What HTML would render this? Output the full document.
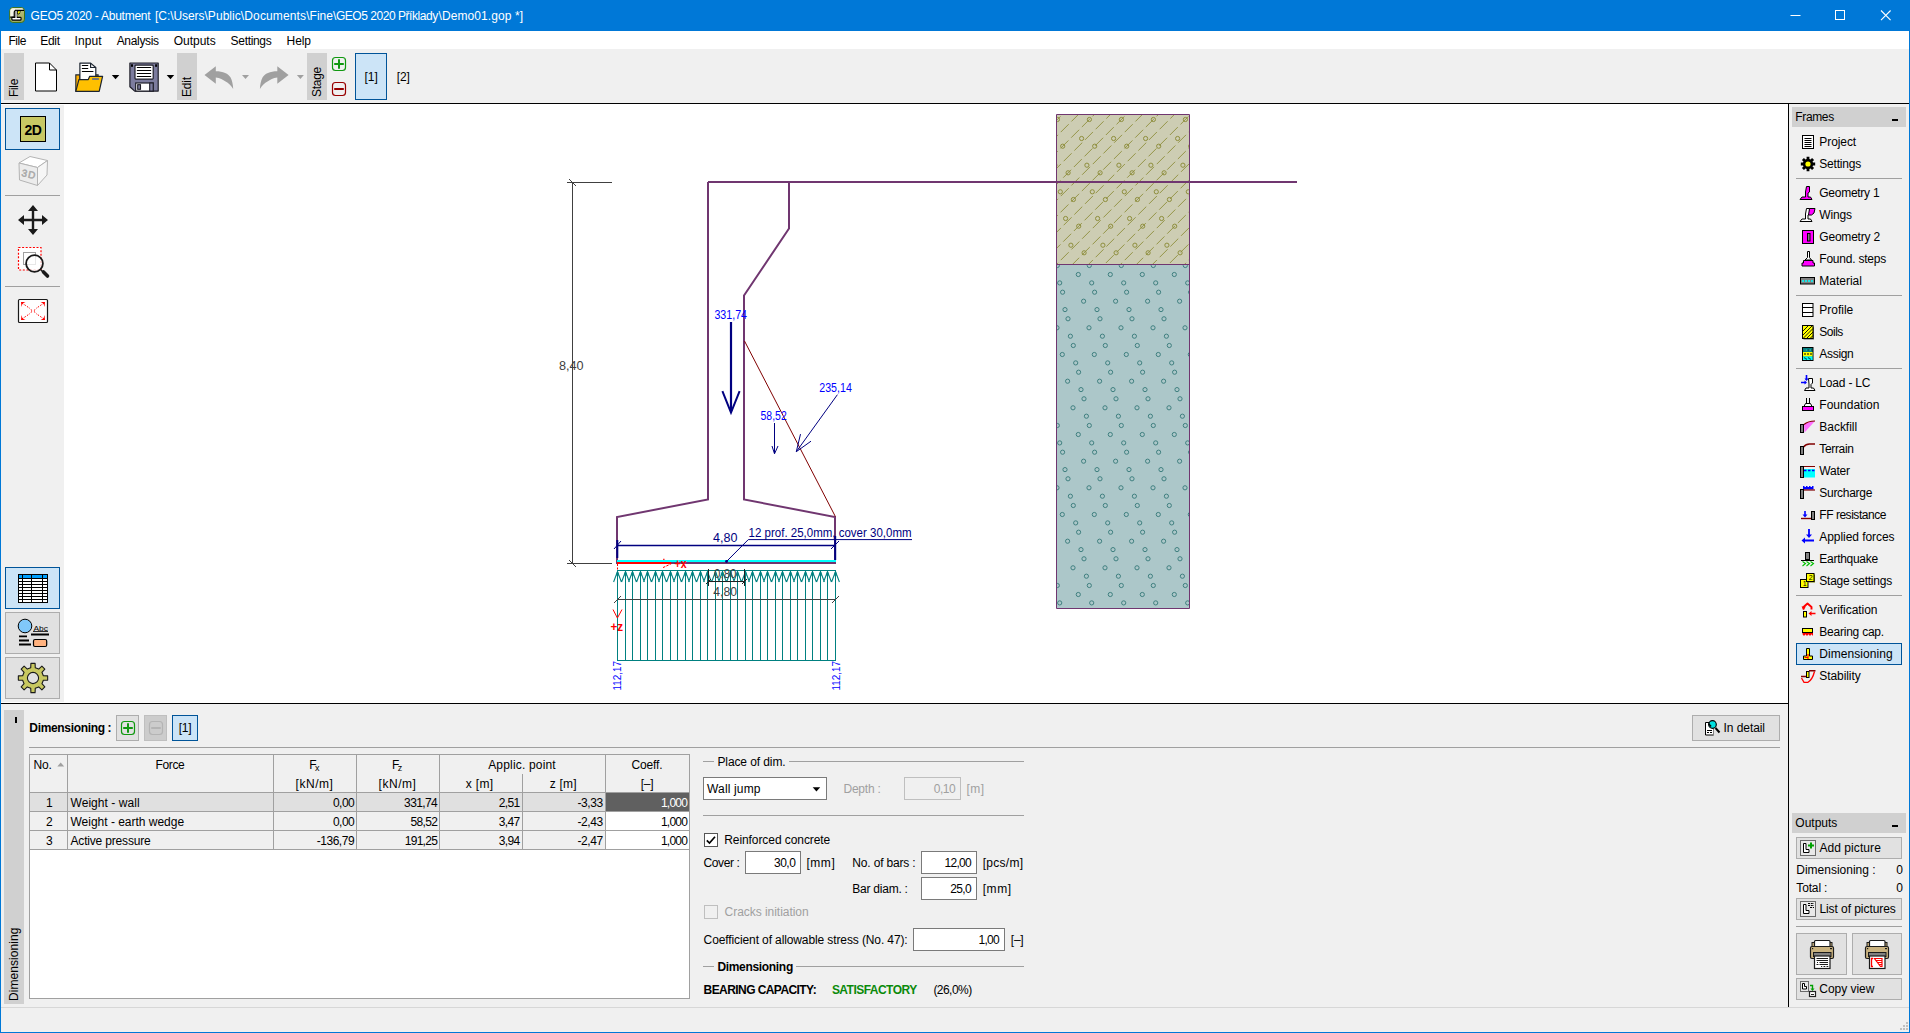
<!DOCTYPE html>
<html lang="en"><head><meta charset="utf-8"><title>GEO5 2020 - Abutment</title>
<style>
*{box-sizing:border-box;margin:0;padding:0}
html,body{width:1910px;height:1033px;overflow:hidden;background:#f0f0f0}
body{position:relative;font-family:"Liberation Sans",sans-serif;font-size:12px;color:#000;line-height:14px}
.a{position:absolute;white-space:nowrap}
.t{position:absolute;white-space:nowrap;height:14px;line-height:14px}
svg{position:absolute;overflow:visible}
.btn{position:absolute;background:#e1e1e1;border:1px solid #adadad}
.sel{position:absolute;background:#cce4f7;border:1px solid #005499}
.inp{position:absolute;background:#fff;border:1px solid #7a7a7a;text-align:right;padding-right:5px;white-space:nowrap}
.hl{position:absolute;height:1px;background:#a0a0a0}
.vt{position:absolute;white-space:nowrap;transform-origin:0 0;transform:rotate(-90deg);height:14px;line-height:14px}
</style></head><body>

<div class="a" style="left:0px;top:0px;width:1910px;height:31px;background:#0078d7;"></div>
<div class="a" style="left:0px;top:31px;width:1px;height:1002px;background:#0078d7;"></div>
<div class="a" style="left:1909px;top:31px;width:1px;height:1002px;background:#0078d7;"></div>
<div class="a" style="left:0px;top:1032px;width:1910px;height:1px;background:#0078d7;"></div>
<svg style="left:9px;top:7px" width="16" height="16" viewBox="0 0 16 16"><defs><linearGradient id="tg" x1="0" y1="0" x2="1" y2="1"><stop offset="0" stop-color="#d8dcb0"/><stop offset=".5" stop-color="#b4bc78"/><stop offset="1" stop-color="#98a458"/></linearGradient></defs>
<rect x="0.700" y="0.600" width="14.800" height="14.800" rx="3.200" fill="url(#tg)" stroke="#3c7014" stroke-width="1"/>
<path d="M1.300 4q0-2.700 2.700-2.700h9.500l1 1.700h-8.500l-1 1.500v5.200h-3.700z" fill="#f4f4e8"/>
<path d="M15 3.400H6.400L5.200 5V10.100H1.200" stroke="#000" stroke-width="1.100" fill="none"/>
<path d="M7 3.800V11H3.600V12.500H11.300V11H7.800" stroke="#000" stroke-width="2.600" fill="none" stroke-linejoin="round"/>
<path d="M8.300 3.600h3.400l-.6 2.600l-1.500 1.300l-1.600-.6z" fill="#000"/>
<path d="M9.100 4.300h2l-.5 1.500l-1 1l-1-.5z" fill="#ffff00"/>
<path d="M7.050 4.300V11.700M3.900 11.750H11" stroke="#fff" stroke-width="1.300" fill="none" stroke-linecap="round"/>
</svg>
<div class="t" style="left:30.6px;top:9.00px;font-size:12px;height:14px;line-height:14px;color:#fff;letter-spacing:-0.248px;">GEO5 2020 - Abutment</div>
<div class="t" style="left:155px;top:9.00px;font-size:12px;height:14px;line-height:14px;color:#fff;letter-spacing:-0.057px;">[C:\Users</div>
<div class="t" style="left:204.5px;top:9.00px;font-size:12px;height:14px;line-height:14px;color:#fff;letter-spacing:0.038px;">\Public</div>
<div class="t" style="left:240.8px;top:9.00px;font-size:12px;height:14px;line-height:14px;color:#fff;letter-spacing:0.137px;">\Documents</div>
<div class="t" style="left:306.2px;top:9.00px;font-size:12px;height:14px;line-height:14px;color:#fff;letter-spacing:0.023px;">\Fine</div>
<div class="t" style="left:333px;top:9.00px;font-size:12px;height:14px;line-height:14px;color:#fff;letter-spacing:-0.457px;">\GEO5 2020 Příklady</div>
<div class="t" style="left:438.5px;top:9.00px;font-size:12px;height:14px;line-height:14px;color:#fff;letter-spacing:0.086px;">\Demo01.gop *]</div>
<svg style="left:1780px;top:0" width="130" height="31" viewBox="0 0 130 31"><path d="M10.5 15.5h10" stroke="#fff" stroke-width="1"/><rect x="55.5" y="10.5" width="9" height="9" fill="none" stroke="#fff" stroke-width="1"/><path d="M101 10.5l9.6 9.6M110.6 10.5l-9.6 9.6" stroke="#fff" stroke-width="1.1"/></svg>
<div class="a" style="left:1px;top:31px;width:1908px;height:18px;background:#fff;"></div>
<div class="t" style="left:8.4px;top:34.00px;font-size:12px;height:14px;line-height:14px;letter-spacing:-0.436px;">File</div>
<div class="t" style="left:40.2px;top:34.00px;font-size:12px;height:14px;line-height:14px;letter-spacing:-0.272px;">Edit</div>
<div class="t" style="left:74.5px;top:34.00px;font-size:12px;height:14px;line-height:14px;letter-spacing:0.119px;">Input</div>
<div class="t" style="left:116.7px;top:34.00px;font-size:12px;height:14px;line-height:14px;letter-spacing:-0.323px;">Analysis</div>
<div class="t" style="left:173.7px;top:34.00px;font-size:12px;height:14px;line-height:14px;letter-spacing:-0.004px;">Outputs</div>
<div class="t" style="left:230.6px;top:34.00px;font-size:12px;height:14px;line-height:14px;letter-spacing:-0.320px;">Settings</div>
<div class="t" style="left:286.6px;top:34.00px;font-size:12px;height:14px;line-height:14px;letter-spacing:-0.122px;">Help</div>
<div class="a" style="left:1px;top:49px;width:1908px;height:54px;background:#f0f0f0;"></div>
<div class="a" style="left:1px;top:103px;width:1908px;height:1px;background:#000;"></div>
<div class="a" style="left:4px;top:53px;width:20px;height:47px;background:#d0d0d0;"></div>
<div class="a" style="left:177px;top:53px;width:20px;height:47px;background:#d0d0d0;"></div>
<div class="a" style="left:307px;top:53px;width:20px;height:47px;background:#d0d0d0;"></div>
<div class="vt" style="left:7px;top:97px;letter-spacing:-0.336px;">File</div>
<div class="vt" style="left:180px;top:97px;letter-spacing:-0.172px;">Edit</div>
<div class="vt" style="left:310px;top:97px;letter-spacing:-0.272px;">Stage</div>
<svg style="left:0;top:0" width="420" height="104" viewBox="0 0 420 104">
<!-- new -->
<path d="M35.5 63h14l7 7v21h-21z" fill="#fff" stroke="#000" stroke-width="1"/><path d="M49.5 63v7h7" fill="none" stroke="#000" stroke-width="1"/>
<!-- open -->
<path d="M75.800 74.900h4v16.400h-4z" fill="#ffb000" stroke="#1c2430" stroke-width="1.100"/>
<path d="M95.500 76.500v-1.600h2.600v1.600" fill="#ffb000" stroke="#1c2430" stroke-width="1.100"/>
<path d="M79.900 63.100h10.700l5.200 4.400v12.500h-15.900z" fill="#fff" stroke="#1c2430" stroke-width="1.200" stroke-linejoin="round"/><path d="M90.600 63.100v4.400h5.200" fill="none" stroke="#1c2430" stroke-width="1.200" stroke-linejoin="round"/>
<path d="M82.300 65.500h5.500M82.300 68.500h5.500M82.300 71.500h10.700" stroke="#000" stroke-width="1.100" stroke-linecap="round"/>
<path d="M75.800 91.300L78.900 79.600h9.400l1.400-3.300h12.900l-3.400 15z" fill="#ffc000" stroke="#1c2430" stroke-width="1.200" stroke-linejoin="round"/>
<rect x="92.100" y="78.200" width="6.800" height="1.600" fill="#5a6890"/>
<path d="M111.800 75h7.500l-3.750 4.300z" fill="#000"/>
<!-- save -->
<path d="M129.900 63h28.300v28.100h-23.500l-4.800-4.400z" fill="#7c7c9e" stroke="#1e1e28" stroke-width="1.200" stroke-linejoin="round"/>
<rect x="135" y="65.100" width="18.200" height="14" rx=".8" fill="#fff" stroke="#1e1e28" stroke-width="1.200"/>
<path d="M137.300 67.500h13.400M137.300 70.500h13.400M137.300 73.500h13.400M137.300 76.500h13.400" stroke="#000" stroke-width="1.100" stroke-linecap="round"/>
<rect x="131" y="64.300" width="2" height="2.500" fill="#000"/><rect x="155.100" y="64.300" width="2" height="2.500" fill="#000"/>
<rect x="135.700" y="83" width="17.500" height="8.100" fill="#fff" stroke="#1e1e28" stroke-width="1.200"/>
<rect x="149.700" y="83" width="3.500" height="8.100" fill="#7c7c9e" stroke="#1e1e28" stroke-width="1.100"/>
<rect x="137.700" y="84.700" width="2.800" height="4.600" fill="#7c7c9e" stroke="#1e1e28" stroke-width="1.100"/>
<path d="M166.700 75h7.500l-3.750 4.300z" fill="#000"/>
<!-- undo / redo -->
<path d="M204.5 75L215.8 66.2V71.2C223 71.2 228.5 73.5 230.6 77.5C232.2 80.5 233.1 85 233.2 89C231 85.500 228.500 83 225.600 81.500C223 80 220 77.800 215.8 77.6V83.8Z" fill="#a0a0a0"/>
<path d="M242 75h7l-3.500 4z" fill="#a0a0a0"/>
<path d="M288.6 75L277.3 66.2V71.2C270.1 71.2 264.6 73.5 262.5 77.5C260.9 80.5 260 85 259.9 89C262.1 85.5 264.6 83 267.5 81.5C270.1 80 273.1 77.8 277.3 77.6V83.8Z" fill="#a0a0a0"/>
<path d="M296.900 75h7l-3.500 4z" fill="#a0a0a0"/>
<!-- stage +/- -->
<rect x="332.500" y="57.500" width="13" height="13" rx="3" fill="none" stroke="#109810" stroke-width="1.200"/><path d="M334.200 64h9.600M339 59.200v9.600" stroke="#109810" stroke-width="2"/>
<rect x="332.500" y="82.500" width="13" height="13" rx="3" fill="none" stroke="#980000" stroke-width="1.200"/><path d="M334.200 89h9.600" stroke="#980000" stroke-width="2"/>
</svg>
<div class="sel" style="left:355px;top:53px;width:32px;height:47px"></div>
<div class="t" style="left:364.5px;top:70.00px;font-size:12px;height:14px;line-height:14px;letter-spacing:-0.048px;">[1]</div>
<div class="t" style="left:396.8px;top:70.00px;font-size:12px;height:14px;line-height:14px;letter-spacing:-0.115px;">[2]</div>
<div class="a" style="left:1px;top:104px;width:1787px;height:599px;background:#fff;"></div>
<div class="a" style="left:1px;top:105px;width:63px;height:597px;background:#f0f0f0;"></div>
<div class="a" style="left:1788px;top:104px;width:1px;height:599px;background:#000;"></div>
<div class="a" style="left:1px;top:703px;width:1788px;height:1px;background:#000;"></div>
<div class="sel" style="left:5px;top:108px;width:55px;height:42px"></div>
<div class="a" style="left:20px;top:116px;width:26px;height:26px;background:#c8c864;border:1px solid #000"></div>
<div class="t" style="left:24.5px;top:122.00px;font-size:14px;height:16px;line-height:16px;font-weight:bold;letter-spacing:-0.453px;">2D</div>
<div class="a" style="left:5px;top:195px;width:55px;height:1px;background:#a0a0a0;"></div>
<div class="a" style="left:5px;top:286px;width:55px;height:1px;background:#a0a0a0;"></div>
<svg style="left:0;top:104px" width="64" height="600" viewBox="0 104 64 600">
<!-- 3D cube -->
<path d="M19 163L30 156.5L47.5 160.5L37.5 167.5Z" fill="#fff" stroke="#b4b4b4" stroke-width="1"/>
<path d="M19 163L37.5 167.5V185.5L19.5 180Z" fill="#ececec" stroke="#b4b4b4" stroke-width="1"/>
<path d="M37.5 167.5L47.5 160.5L47 175L37.5 185.5Z" fill="#f6f6f6" stroke="#b4b4b4" stroke-width="1"/>
<text x="21" y="176" font-size="10" font-family="Liberation Sans,sans-serif" fill="#a8a8a8" stroke="#a8a8a8" stroke-width=".5" transform="rotate(12 21 176)" textLength="14">3D</text>
<!-- move -->
<path d="M33 208v24M21 220h24" stroke="#1a1a1a" stroke-width="2.4"/>
<path d="M33 205l5 6h-10zM33 235l5-6h-10zM18 220l6-5v10zM48 220l-6-5v10z" fill="#1a1a1a"/>
<!-- zoom window -->
<rect x="18.5" y="247.5" width="22.5" height="22.5" fill="#fff" stroke="#ff0000" stroke-width="1.2" stroke-dasharray="2 1.6"/>
<rect x="23.5" y="252.5" width="12" height="12" fill="none" stroke="#a0a0a0" stroke-width="1"/>
<circle cx="34.5" cy="263.5" r="8.4" fill="#fff" fill-opacity=".75" stroke="#1a1a1a" stroke-width="1.8"/>
<path d="M24.5 252.5h11v8" fill="none" stroke="#a0a0a0" stroke-width="1" opacity=".0"/>
<path d="M41 270l2.5 2.5" stroke="#1a1a1a" stroke-width="1.6"/><path d="M43.5 272l4 4" stroke="#1a1a1a" stroke-width="3.6" stroke-linecap="round"/>
<!-- fit -->
<rect x="18.5" y="299.5" width="29" height="23" rx="1" fill="#fff" stroke="#1a1a1a" stroke-width="1.2"/>
<path d="M22 303l8 5.5M44 303l-8 5.5M22 319l8-5.5M44 319l-8-5.5" stroke="#ff0000" stroke-width="1" stroke-dasharray="1.6 1.4"/>
<path d="M21 302h4.5l-3 1.5l-1 3.5zM45 302h-4.5l3 1.5l1 3.5zM21 320h4.5l-3-1.5l-1-3.5zM45 320h-4.5l3-1.5l1-3.5z" fill="#ff0000"/>
<path d="M31 309q1.5 2 0 4M35 309q-1.5 2 0 4" stroke="#ff6060" stroke-width="1" fill="none"/>
</svg>
<div class="sel" style="left:5px;top:567px;width:55px;height:42px"></div>
<div class="btn" style="left:5px;top:612px;width:55px;height:42px"></div>
<div class="btn" style="left:5px;top:657px;width:55px;height:42px"></div>
<div class="a" style="left:18px;top:574px;width:30px;height:29px;background:#000;"></div>
<div class="a" style="left:19px;top:575px;width:28px;height:3px;background:#00a0ff;"></div>
<div class="a" style="left:19px;top:579px;width:28px;height:2px;background:#fff;"></div>
<div class="a" style="left:19px;top:582px;width:28px;height:2px;background:#fff;"></div>
<div class="a" style="left:19px;top:585px;width:28px;height:2px;background:#fff;"></div>
<div class="a" style="left:19px;top:588px;width:28px;height:2px;background:#fff;"></div>
<div class="a" style="left:19px;top:591px;width:28px;height:2px;background:#fff;"></div>
<div class="a" style="left:19px;top:594px;width:28px;height:2px;background:#fff;"></div>
<div class="a" style="left:19px;top:597px;width:28px;height:2px;background:#fff;"></div>
<div class="a" style="left:19px;top:600px;width:28px;height:2px;background:#fff;"></div>
<div class="a" style="left:22px;top:575px;width:1px;height:27px;background:#000;"></div>
<div class="a" style="left:31px;top:575px;width:1px;height:27px;background:#000;"></div>
<div class="a" style="left:42px;top:575px;width:1px;height:27px;background:#000;"></div>
<svg style="left:0;top:560px" width="64" height="144" viewBox="0 560 64 144">
<circle cx="25" cy="626" r="6.8" fill="#80c8fa" stroke="#000" stroke-width="1"/>
<text x="33.5" y="631" font-size="8" font-family="Liberation Sans,sans-serif" fill="#000" textLength="14.5" lengthAdjust="spacingAndGlyphs">Abc</text>
<path d="M33 631.5h15" stroke="#000" stroke-width="0.8"/>
<path d="M31 634.5h18M19 636.3h8M19 640.5h10M19 644.5h12" stroke="#000" stroke-width="1.8"/>
<rect x="33.5" y="639.5" width="13.2" height="7" rx="1.5" fill="#ffb27f" stroke="#000" stroke-width="1.2"/>
<path d="M30.73 667.65L30.91 663.35L35.09 663.35L35.27 667.65L38.71 669.07L41.89 666.16L44.84 669.11L41.93 672.29L43.35 675.73L47.65 675.91L47.65 680.09L43.35 680.27L41.93 683.71L44.84 686.89L41.89 689.84L38.71 686.93L35.27 688.35L35.09 692.65L30.91 692.65L30.73 688.35L27.29 686.93L24.11 689.84L21.16 686.89L24.07 683.71L22.65 680.27L18.35 680.09L18.35 675.91L22.65 675.73L24.07 672.29L21.16 669.11L24.11 666.16L27.29 669.07Z" fill="#c8c860" stroke="#1a1a1a" stroke-width="1.1" stroke-linejoin="round"/>
<circle cx="33" cy="678" r="5.6" fill="#e1e1e1" stroke="#1a1a1a" stroke-width="1.1"/>
</svg>
<svg style="left:0;top:0" width="1788" height="703" viewBox="0 0 1788 703" font-family="Liberation Sans,sans-serif" font-size="12">
<clipPath id="cu"><rect x="1057" y="115" width="132" height="149"/></clipPath><clipPath id="cl"><rect x="1057" y="265" width="132" height="343"/></clipPath><rect x="1056.5" y="114.5" width="133" height="150" fill="#cdcdb3"/><rect x="1056.5" y="264.5" width="133" height="344" fill="#acc7c9"/><g clip-path="url(#cu)"><g stroke="#8e8e3c" stroke-width="0.9" stroke-dasharray="11.2 3.885" fill="none"><path d="M1034.9 110L874.9 270" stroke-dashoffset="2.2"/><path d="M1050.9 110L890.9 270" stroke-dashoffset="14.2"/><path d="M1066.9 110L906.9 270" stroke-dashoffset="6.0"/><path d="M1082.9 110L922.9 270" stroke-dashoffset="10.1"/><path d="M1098.9 110L938.9 270" stroke-dashoffset="2.2"/><path d="M1114.9 110L954.9 270" stroke-dashoffset="14.2"/><path d="M1130.9 110L970.9 270" stroke-dashoffset="6.0"/><path d="M1146.9 110L986.9 270" stroke-dashoffset="10.1"/><path d="M1162.9 110L1002.9 270" stroke-dashoffset="2.2"/><path d="M1178.9 110L1018.9 270" stroke-dashoffset="14.2"/><path d="M1194.9 110L1034.9 270" stroke-dashoffset="6.0"/><path d="M1210.9 110L1050.9 270" stroke-dashoffset="10.1"/><path d="M1226.9 110L1066.9 270" stroke-dashoffset="2.2"/><path d="M1242.9 110L1082.9 270" stroke-dashoffset="14.2"/><path d="M1258.9 110L1098.9 270" stroke-dashoffset="6.0"/><path d="M1274.9 110L1114.9 270" stroke-dashoffset="10.1"/><path d="M1290.9 110L1130.9 270" stroke-dashoffset="2.2"/><path d="M1306.9 110L1146.9 270" stroke-dashoffset="14.2"/><path d="M1322.9 110L1162.9 270" stroke-dashoffset="6.0"/><path d="M1338.9 110L1178.9 270" stroke-dashoffset="10.1"/><path d="M1354.9 110L1194.9 270" stroke-dashoffset="2.2"/><path d="M1370.9 110L1210.9 270" stroke-dashoffset="14.2"/><path d="M1386.9 110L1226.9 270" stroke-dashoffset="6.0"/><path d="M1402.9 110L1242.9 270" stroke-dashoffset="10.1"/><path d="M1418.9 110L1258.9 270" stroke-dashoffset="2.2"/><path d="M1434.9 110L1274.9 270" stroke-dashoffset="14.2"/><path d="M1450.9 110L1290.9 270" stroke-dashoffset="6.0"/><path d="M1466.9 110L1306.9 270" stroke-dashoffset="10.1"/></g><g stroke="#8e8e3c" stroke-width="1" fill="none"><circle cx="1057.4" cy="119.5" r="2.1"/><circle cx="1089.4" cy="119.5" r="2.1"/><circle cx="1121.4" cy="119.5" r="2.1"/><circle cx="1153.4" cy="119.5" r="2.1"/><circle cx="1185.4" cy="119.5" r="2.1"/><circle cx="1062.7" cy="146.2" r="2.1"/><circle cx="1094.7" cy="146.2" r="2.1"/><circle cx="1126.7" cy="146.2" r="2.1"/><circle cx="1158.7" cy="146.2" r="2.1"/><circle cx="1190.7" cy="146.2" r="2.1"/><circle cx="1068.1" cy="172.8" r="2.1"/><circle cx="1100.1" cy="172.8" r="2.1"/><circle cx="1132.1" cy="172.8" r="2.1"/><circle cx="1164.1" cy="172.8" r="2.1"/><circle cx="1073.4" cy="199.5" r="2.1"/><circle cx="1105.4" cy="199.5" r="2.1"/><circle cx="1137.4" cy="199.5" r="2.1"/><circle cx="1169.4" cy="199.5" r="2.1"/><circle cx="1078.7" cy="226.2" r="2.1"/><circle cx="1110.7" cy="226.2" r="2.1"/><circle cx="1142.7" cy="226.2" r="2.1"/><circle cx="1174.7" cy="226.2" r="2.1"/><circle cx="1052.1" cy="252.8" r="2.1"/><circle cx="1084.1" cy="252.8" r="2.1"/><circle cx="1116.1" cy="252.8" r="2.1"/><circle cx="1148.1" cy="252.8" r="2.1"/><circle cx="1180.1" cy="252.8" r="2.1"/><circle cx="1076.3" cy="111.8" r="2.1"/><circle cx="1108.3" cy="111.8" r="2.1"/><circle cx="1140.3" cy="111.8" r="2.1"/><circle cx="1172.3" cy="111.8" r="2.1"/><circle cx="1081.6" cy="138.5" r="2.1"/><circle cx="1113.6" cy="138.5" r="2.1"/><circle cx="1145.6" cy="138.5" r="2.1"/><circle cx="1177.6" cy="138.5" r="2.1"/><circle cx="1054.9" cy="165.2" r="2.1"/><circle cx="1086.9" cy="165.2" r="2.1"/><circle cx="1118.9" cy="165.2" r="2.1"/><circle cx="1150.9" cy="165.2" r="2.1"/><circle cx="1182.9" cy="165.2" r="2.1"/><circle cx="1060.3" cy="191.8" r="2.1"/><circle cx="1092.3" cy="191.8" r="2.1"/><circle cx="1124.3" cy="191.8" r="2.1"/><circle cx="1156.3" cy="191.8" r="2.1"/><circle cx="1188.3" cy="191.8" r="2.1"/><circle cx="1065.6" cy="218.5" r="2.1"/><circle cx="1097.6" cy="218.5" r="2.1"/><circle cx="1129.6" cy="218.5" r="2.1"/><circle cx="1161.6" cy="218.5" r="2.1"/><circle cx="1193.6" cy="218.5" r="2.1"/><circle cx="1070.9" cy="245.2" r="2.1"/><circle cx="1102.9" cy="245.2" r="2.1"/><circle cx="1134.9" cy="245.2" r="2.1"/><circle cx="1166.9" cy="245.2" r="2.1"/></g></g><g clip-path="url(#cl)" stroke="#408080" stroke-width="1" fill="none"><circle cx="1078.3" cy="274.5" r="2.1"/><circle cx="1110.3" cy="274.5" r="2.1"/><circle cx="1142.3" cy="274.5" r="2.1"/><circle cx="1174.3" cy="274.5" r="2.1"/><circle cx="1083.6" cy="301.2" r="2.1"/><circle cx="1115.6" cy="301.2" r="2.1"/><circle cx="1147.6" cy="301.2" r="2.1"/><circle cx="1179.6" cy="301.2" r="2.1"/><circle cx="1057.0" cy="327.8" r="2.1"/><circle cx="1089.0" cy="327.8" r="2.1"/><circle cx="1121.0" cy="327.8" r="2.1"/><circle cx="1153.0" cy="327.8" r="2.1"/><circle cx="1185.0" cy="327.8" r="2.1"/><circle cx="1062.3" cy="354.5" r="2.1"/><circle cx="1094.3" cy="354.5" r="2.1"/><circle cx="1126.3" cy="354.5" r="2.1"/><circle cx="1158.3" cy="354.5" r="2.1"/><circle cx="1190.3" cy="354.5" r="2.1"/><circle cx="1067.6" cy="381.2" r="2.1"/><circle cx="1099.6" cy="381.2" r="2.1"/><circle cx="1131.6" cy="381.2" r="2.1"/><circle cx="1163.6" cy="381.2" r="2.1"/><circle cx="1073.0" cy="407.8" r="2.1"/><circle cx="1105.0" cy="407.8" r="2.1"/><circle cx="1137.0" cy="407.8" r="2.1"/><circle cx="1169.0" cy="407.8" r="2.1"/><circle cx="1078.3" cy="434.5" r="2.1"/><circle cx="1110.3" cy="434.5" r="2.1"/><circle cx="1142.3" cy="434.5" r="2.1"/><circle cx="1174.3" cy="434.5" r="2.1"/><circle cx="1083.6" cy="461.2" r="2.1"/><circle cx="1115.6" cy="461.2" r="2.1"/><circle cx="1147.6" cy="461.2" r="2.1"/><circle cx="1179.6" cy="461.2" r="2.1"/><circle cx="1057.0" cy="487.8" r="2.1"/><circle cx="1089.0" cy="487.8" r="2.1"/><circle cx="1121.0" cy="487.8" r="2.1"/><circle cx="1153.0" cy="487.8" r="2.1"/><circle cx="1185.0" cy="487.8" r="2.1"/><circle cx="1062.3" cy="514.5" r="2.1"/><circle cx="1094.3" cy="514.5" r="2.1"/><circle cx="1126.3" cy="514.5" r="2.1"/><circle cx="1158.3" cy="514.5" r="2.1"/><circle cx="1190.3" cy="514.5" r="2.1"/><circle cx="1067.6" cy="541.2" r="2.1"/><circle cx="1099.6" cy="541.2" r="2.1"/><circle cx="1131.6" cy="541.2" r="2.1"/><circle cx="1163.6" cy="541.2" r="2.1"/><circle cx="1073.0" cy="567.8" r="2.1"/><circle cx="1105.0" cy="567.8" r="2.1"/><circle cx="1137.0" cy="567.8" r="2.1"/><circle cx="1169.0" cy="567.8" r="2.1"/><circle cx="1078.3" cy="594.5" r="2.1"/><circle cx="1110.3" cy="594.5" r="2.1"/><circle cx="1142.3" cy="594.5" r="2.1"/><circle cx="1174.3" cy="594.5" r="2.1"/><circle cx="1059.7" cy="282.9" r="2.1"/><circle cx="1091.7" cy="282.9" r="2.1"/><circle cx="1123.7" cy="282.9" r="2.1"/><circle cx="1155.7" cy="282.9" r="2.1"/><circle cx="1187.7" cy="282.9" r="2.1"/><circle cx="1065.0" cy="309.6" r="2.1"/><circle cx="1097.0" cy="309.6" r="2.1"/><circle cx="1129.0" cy="309.6" r="2.1"/><circle cx="1161.0" cy="309.6" r="2.1"/><circle cx="1193.0" cy="309.6" r="2.1"/><circle cx="1070.4" cy="336.2" r="2.1"/><circle cx="1102.4" cy="336.2" r="2.1"/><circle cx="1134.4" cy="336.2" r="2.1"/><circle cx="1166.4" cy="336.2" r="2.1"/><circle cx="1075.7" cy="362.9" r="2.1"/><circle cx="1107.7" cy="362.9" r="2.1"/><circle cx="1139.7" cy="362.9" r="2.1"/><circle cx="1171.7" cy="362.9" r="2.1"/><circle cx="1081.0" cy="389.6" r="2.1"/><circle cx="1113.0" cy="389.6" r="2.1"/><circle cx="1145.0" cy="389.6" r="2.1"/><circle cx="1177.0" cy="389.6" r="2.1"/><circle cx="1054.4" cy="416.2" r="2.1"/><circle cx="1086.4" cy="416.2" r="2.1"/><circle cx="1118.4" cy="416.2" r="2.1"/><circle cx="1150.4" cy="416.2" r="2.1"/><circle cx="1182.4" cy="416.2" r="2.1"/><circle cx="1059.7" cy="442.9" r="2.1"/><circle cx="1091.7" cy="442.9" r="2.1"/><circle cx="1123.7" cy="442.9" r="2.1"/><circle cx="1155.7" cy="442.9" r="2.1"/><circle cx="1187.7" cy="442.9" r="2.1"/><circle cx="1065.0" cy="469.6" r="2.1"/><circle cx="1097.0" cy="469.6" r="2.1"/><circle cx="1129.0" cy="469.6" r="2.1"/><circle cx="1161.0" cy="469.6" r="2.1"/><circle cx="1193.0" cy="469.6" r="2.1"/><circle cx="1070.4" cy="496.2" r="2.1"/><circle cx="1102.4" cy="496.2" r="2.1"/><circle cx="1134.4" cy="496.2" r="2.1"/><circle cx="1166.4" cy="496.2" r="2.1"/><circle cx="1075.7" cy="522.9" r="2.1"/><circle cx="1107.7" cy="522.9" r="2.1"/><circle cx="1139.7" cy="522.9" r="2.1"/><circle cx="1171.7" cy="522.9" r="2.1"/><circle cx="1081.0" cy="549.6" r="2.1"/><circle cx="1113.0" cy="549.6" r="2.1"/><circle cx="1145.0" cy="549.6" r="2.1"/><circle cx="1177.0" cy="549.6" r="2.1"/><circle cx="1054.4" cy="576.2" r="2.1"/><circle cx="1086.4" cy="576.2" r="2.1"/><circle cx="1118.4" cy="576.2" r="2.1"/><circle cx="1150.4" cy="576.2" r="2.1"/><circle cx="1182.4" cy="576.2" r="2.1"/><circle cx="1059.7" cy="602.9" r="2.1"/><circle cx="1091.7" cy="602.9" r="2.1"/><circle cx="1123.7" cy="602.9" r="2.1"/><circle cx="1155.7" cy="602.9" r="2.1"/><circle cx="1187.7" cy="602.9" r="2.1"/><circle cx="1057.3" cy="265.5" r="2.1"/><circle cx="1089.3" cy="265.5" r="2.1"/><circle cx="1121.3" cy="265.5" r="2.1"/><circle cx="1153.3" cy="265.5" r="2.1"/><circle cx="1185.3" cy="265.5" r="2.1"/><circle cx="1062.6" cy="292.2" r="2.1"/><circle cx="1094.6" cy="292.2" r="2.1"/><circle cx="1126.6" cy="292.2" r="2.1"/><circle cx="1158.6" cy="292.2" r="2.1"/><circle cx="1190.6" cy="292.2" r="2.1"/><circle cx="1068.0" cy="318.8" r="2.1"/><circle cx="1100.0" cy="318.8" r="2.1"/><circle cx="1132.0" cy="318.8" r="2.1"/><circle cx="1164.0" cy="318.8" r="2.1"/><circle cx="1073.3" cy="345.5" r="2.1"/><circle cx="1105.3" cy="345.5" r="2.1"/><circle cx="1137.3" cy="345.5" r="2.1"/><circle cx="1169.3" cy="345.5" r="2.1"/><circle cx="1078.6" cy="372.2" r="2.1"/><circle cx="1110.6" cy="372.2" r="2.1"/><circle cx="1142.6" cy="372.2" r="2.1"/><circle cx="1174.6" cy="372.2" r="2.1"/><circle cx="1084.0" cy="398.8" r="2.1"/><circle cx="1116.0" cy="398.8" r="2.1"/><circle cx="1148.0" cy="398.8" r="2.1"/><circle cx="1180.0" cy="398.8" r="2.1"/><circle cx="1057.3" cy="425.5" r="2.1"/><circle cx="1089.3" cy="425.5" r="2.1"/><circle cx="1121.3" cy="425.5" r="2.1"/><circle cx="1153.3" cy="425.5" r="2.1"/><circle cx="1185.3" cy="425.5" r="2.1"/><circle cx="1062.6" cy="452.2" r="2.1"/><circle cx="1094.6" cy="452.2" r="2.1"/><circle cx="1126.6" cy="452.2" r="2.1"/><circle cx="1158.6" cy="452.2" r="2.1"/><circle cx="1190.6" cy="452.2" r="2.1"/><circle cx="1068.0" cy="478.8" r="2.1"/><circle cx="1100.0" cy="478.8" r="2.1"/><circle cx="1132.0" cy="478.8" r="2.1"/><circle cx="1164.0" cy="478.8" r="2.1"/><circle cx="1073.3" cy="505.5" r="2.1"/><circle cx="1105.3" cy="505.5" r="2.1"/><circle cx="1137.3" cy="505.5" r="2.1"/><circle cx="1169.3" cy="505.5" r="2.1"/><circle cx="1078.6" cy="532.2" r="2.1"/><circle cx="1110.6" cy="532.2" r="2.1"/><circle cx="1142.6" cy="532.2" r="2.1"/><circle cx="1174.6" cy="532.2" r="2.1"/><circle cx="1084.0" cy="558.8" r="2.1"/><circle cx="1116.0" cy="558.8" r="2.1"/><circle cx="1148.0" cy="558.8" r="2.1"/><circle cx="1180.0" cy="558.8" r="2.1"/><circle cx="1057.3" cy="585.5" r="2.1"/><circle cx="1089.3" cy="585.5" r="2.1"/><circle cx="1121.3" cy="585.5" r="2.1"/><circle cx="1153.3" cy="585.5" r="2.1"/><circle cx="1185.3" cy="585.5" r="2.1"/></g><path d="M1056.5 114.5h133v494h-133zM1056.5 264.5h133" stroke="#703670" stroke-width="1" fill="none"/>
<g stroke="#404040" stroke-width="1" fill="none"><path d="M567 182.5h45M572.5 182v381M567 563.5h45M569 179l7 7M569 560l7 7"/></g>
<text x="559" y="370" fill="#404040" lengthAdjust="spacingAndGlyphs" textLength="24.6">8,40</text>
<path d="M708 182H1297" stroke="#703670" stroke-width="2" fill="none"/>
<path d="M708 182V499.5L617 517V563H835V517L744 499.5V295.5L789 228.5V182" stroke="#703670" stroke-width="2" fill="none" stroke-linejoin="miter"/>
<path d="M744.5 341L835.4 516.6" stroke="#800000" stroke-width="1" fill="none"/>
<path d="M731 322V411" stroke="#000080" stroke-width="2.2" fill="none"/><path d="M722.4 391.2L731 412.5L739.6 391.2" stroke="#000080" stroke-width="2" fill="none"/>
<text x="714.4" y="319" fill="#0000ff" lengthAdjust="spacingAndGlyphs" textLength="32.6">331,74</text>
<path d="M774.5 423V453.5M772 446L774.5 453.8L778 446" stroke="#000080" stroke-width="1" fill="none"/>
<text x="760.5" y="420" fill="#0000ff" lengthAdjust="spacingAndGlyphs" textLength="26.2">58,52</text>
<path d="M837.4 394.7L796.3 451.7M800.5 434.1L796.3 451.7L811 441.2" stroke="#000080" stroke-width="1" fill="none"/>
<text x="819.3" y="392" fill="#0000ff" lengthAdjust="spacingAndGlyphs" textLength="32.5">235,14</text>
<path d="M617.5 571V660M625.5 571V660M632.5 571V660M640.5 571V660M647.5 571V660M655.5 571V660M662.5 571V660M670.5 571V660M677.5 571V660M685.5 571V660M692.5 571V660M700.5 571V660M707.5 571V660M715.5 571V660M722.5 571V660M730.5 571V660M737.5 571V660M745.5 571V660M752.5 571V660M760.5 571V660M767.5 571V660M775.5 571V660M782.5 571V660M790.5 571V660M797.5 571V660M805.5 571V660M812.5 571V660M820.5 571V660M827.5 571V660M835.5 571V660M617 570.5H836M617 660.5H836" stroke="#008080" stroke-width="1" fill="none" shape-rendering="crispEdges"/>
<path d="M613.6 582L617.5 571.5L621.4 582M621.6 582L625.5 571.5L629.4 582M628.6 582L632.5 571.5L636.4 582M636.6 582L640.5 571.5L644.4 582M643.6 582L647.5 571.5L651.4 582M651.6 582L655.5 571.5L659.4 582M658.6 582L662.5 571.5L666.4 582M666.6 582L670.5 571.5L674.4 582M673.6 582L677.5 571.5L681.4 582M681.6 582L685.5 571.5L689.4 582M688.6 582L692.5 571.5L696.4 582M696.6 582L700.5 571.5L704.4 582M703.6 582L707.5 571.5L711.4 582M711.6 582L715.5 571.5L719.4 582M718.6 582L722.5 571.5L726.4 582M726.6 582L730.5 571.5L734.4 582M733.6 582L737.5 571.5L741.4 582M741.6 582L745.5 571.5L749.4 582M748.6 582L752.5 571.5L756.4 582M756.6 582L760.5 571.5L764.4 582M763.6 582L767.5 571.5L771.4 582M771.6 582L775.5 571.5L779.4 582M778.6 582L782.5 571.5L786.4 582M786.6 582L790.5 571.5L794.4 582M793.6 582L797.5 571.5L801.4 582M801.6 582L805.5 571.5L809.4 582M808.6 582L812.5 571.5L816.4 582M816.6 582L820.5 571.5L824.4 582M823.6 582L827.5 571.5L831.4 582M831.6 582L835.5 571.5L839.4 582" stroke="#008080" stroke-width="1.1" fill="none"/>
<path d="M617.5 572.5V576M625.5 572.5V576M632.5 572.5V576M640.5 572.5V576M647.5 572.5V576M655.5 572.5V576M662.5 572.5V576M670.5 572.5V576M677.5 572.5V576M685.5 572.5V576M692.5 572.5V576M700.5 572.5V576M707.5 572.5V576M715.5 572.5V576M722.5 572.5V576M730.5 572.5V576M737.5 572.5V576M745.5 572.5V576M752.5 572.5V576M760.5 572.5V576M767.5 572.5V576M775.5 572.5V576M782.5 572.5V576M790.5 572.5V576M797.5 572.5V576M805.5 572.5V576M812.5 572.5V576M820.5 572.5V576M827.5 572.5V576M835.5 572.5V576" stroke="#008080" stroke-width="2" fill="none"/>
<text x="714" y="578" fill="#404040" lengthAdjust="spacingAndGlyphs" textLength="22.5">0,80</text>
<g stroke="#202020" stroke-width="1" fill="none"><path d="M708.5 569V586M744.5 569V586M708 581.5H745M706 584l5-5M742 584l5-5"/></g>
<text x="713.3" y="595.5" fill="#404040" lengthAdjust="spacingAndGlyphs" textLength="23.7">4,80</text>
<g stroke="#404040" stroke-width="1" fill="none"><path d="M617 599.5H835M614 603l7-7M832 603l7-7"/></g>
<path d="M617 563H671" stroke="#ff0000" stroke-width="2" fill="none"/>
<path d="M663 567.6L671.5 563.6" stroke="#ff0000" stroke-width="1" stroke-dasharray="2.5 1.2" fill="none"/><rect x="663" y="558.8" width="1.6" height="1" fill="#ff0000"/>
<path d="M617.5 564V570" stroke="#ff0000" stroke-width="1" stroke-dasharray="2 1.5" fill="none"/>
<path d="M613 609.5L617.4 618L622 609.5" stroke="#ff0000" stroke-width="1" fill="none"/>
<text x="610.5" y="631.3" fill="#ff0000" font-weight="bold" lengthAdjust="spacingAndGlyphs" textLength="12.6">+z</text>
<path d="M617 561H836" stroke="#00ffff" stroke-width="2" fill="none"/>
<g stroke="#000080" fill="none"><path d="M617 545.5H835" stroke-width="1.6"/><path d="M617.3 540V558M835.2 536V560" stroke-width="2"/><path d="M614 549l7-8M831 549l8-8" stroke-width="1"/><path d="M726.5 561.5L748.3 539.6H912" stroke-width="1"/></g><circle cx="726.5" cy="561.5" r="1.4" fill="#000080"/>
<text x="713" y="542" fill="#000080" lengthAdjust="spacingAndGlyphs" textLength="24.4">4,80</text>
<text x="748.6" y="537" fill="#000080" lengthAdjust="spacingAndGlyphs" textLength="163">12 prof. 25,0mm, cover 30,0mm</text>
<text x="674.5" y="568" fill="#ff0000" font-weight="bold" lengthAdjust="spacingAndGlyphs" textLength="12">+x</text>
<text transform="translate(621.3 690.6) rotate(-90)" fill="#0000ff" font-size="11" lengthAdjust="spacingAndGlyphs" textLength="29.5">112,17</text>
<text transform="translate(839.6 690.6) rotate(-90)" fill="#0000ff" font-size="11" lengthAdjust="spacingAndGlyphs" textLength="29.5">112,17</text>
</svg>
<div class="a" style="left:1789px;top:104px;width:120px;height:903px;background:#f0f0f0;"></div>
<div class="a" style="left:1788px;top:703px;width:1px;height:304px;background:#000;"></div>
<div class="a" style="left:1792px;top:107px;width:114px;height:20px;background:#d0d0d0;"></div>
<div class="t" style="left:1795.3px;top:110.00px;font-size:12px;height:14px;line-height:14px;letter-spacing:-0.362px;">Frames</div>
<div class="a" style="left:1892px;top:119px;width:6px;height:2px;background:#000;"></div>
<div class="sel" style="left:1796px;top:643px;width:106px;height:22px"></div>
<div class="t" style="left:1819.3px;top:135.00px;font-size:12px;height:14px;line-height:14px;letter-spacing:-0.080px;">Project</div>
<div class="t" style="left:1819.3px;top:157.00px;font-size:12px;height:14px;line-height:14px;letter-spacing:-0.207px;">Settings</div>
<div class="t" style="left:1819.3px;top:186.00px;font-size:12px;height:14px;line-height:14px;letter-spacing:-0.270px;">Geometry 1</div>
<div class="t" style="left:1819.3px;top:208.00px;font-size:12px;height:14px;line-height:14px;letter-spacing:-0.169px;">Wings</div>
<div class="t" style="left:1819.3px;top:230.00px;font-size:12px;height:14px;line-height:14px;letter-spacing:-0.210px;">Geometry 2</div>
<div class="t" style="left:1819.3px;top:252.00px;font-size:12px;height:14px;line-height:14px;letter-spacing:-0.223px;">Found. steps</div>
<div class="t" style="left:1819.3px;top:274.00px;font-size:12px;height:14px;line-height:14px;letter-spacing:-0.011px;">Material</div>
<div class="t" style="left:1819.3px;top:303.00px;font-size:12px;height:14px;line-height:14px;letter-spacing:-0.017px;">Profile</div>
<div class="t" style="left:1819.3px;top:325.00px;font-size:12px;height:14px;line-height:14px;letter-spacing:-0.503px;">Soils</div>
<div class="t" style="left:1819.3px;top:347.00px;font-size:12px;height:14px;line-height:14px;letter-spacing:-0.305px;">Assign</div>
<div class="t" style="left:1819.3px;top:376.00px;font-size:12px;height:14px;line-height:14px;letter-spacing:-0.189px;">Load - LC</div>
<div class="t" style="left:1819.3px;top:398.00px;font-size:12px;height:14px;line-height:14px;letter-spacing:0.015px;">Foundation</div>
<div class="t" style="left:1819.3px;top:420.00px;font-size:12px;height:14px;line-height:14px;letter-spacing:-0.027px;">Backfill</div>
<div class="t" style="left:1819.3px;top:442.00px;font-size:12px;height:14px;line-height:14px;letter-spacing:-0.341px;">Terrain</div>
<div class="t" style="left:1819.3px;top:464.00px;font-size:12px;height:14px;line-height:14px;letter-spacing:-0.233px;">Water</div>
<div class="t" style="left:1819.3px;top:486.00px;font-size:12px;height:14px;line-height:14px;letter-spacing:-0.286px;">Surcharge</div>
<div class="t" style="left:1819.3px;top:508.00px;font-size:12px;height:14px;line-height:14px;letter-spacing:-0.468px;">FF resistance</div>
<div class="t" style="left:1819.3px;top:530.00px;font-size:12px;height:14px;line-height:14px;letter-spacing:-0.060px;">Applied forces</div>
<div class="t" style="left:1819.3px;top:552.00px;font-size:12px;height:14px;line-height:14px;letter-spacing:-0.279px;">Earthquake</div>
<div class="t" style="left:1819.3px;top:574.00px;font-size:12px;height:14px;line-height:14px;letter-spacing:-0.247px;">Stage settings</div>
<div class="t" style="left:1819.3px;top:603.00px;font-size:12px;height:14px;line-height:14px;letter-spacing:-0.042px;">Verification</div>
<div class="t" style="left:1819.3px;top:625.00px;font-size:12px;height:14px;line-height:14px;letter-spacing:-0.233px;">Bearing cap.</div>
<div class="t" style="left:1819.3px;top:647.00px;font-size:12px;height:14px;line-height:14px;letter-spacing:0.050px;">Dimensioning</div>
<div class="t" style="left:1819.3px;top:669.00px;font-size:12px;height:14px;line-height:14px;letter-spacing:-0.081px;">Stability</div>
<div class="a" style="left:1796px;top:178px;width:106px;height:1px;background:#a0a0a0;"></div>
<div class="a" style="left:1796px;top:295px;width:106px;height:1px;background:#a0a0a0;"></div>
<div class="a" style="left:1796px;top:368px;width:106px;height:1px;background:#a0a0a0;"></div>
<div class="a" style="left:1796px;top:595px;width:106px;height:1px;background:#a0a0a0;"></div>
<svg style="left:1789px;top:104px" width="120" height="600" viewBox="1789 104 120 600"><rect x="1802.5" y="135.5" width="11" height="13" fill="#fff" stroke="#000"/><path d="M1804.5 138.5h7M1804.5 140.5h7M1804.5 142.5h7M1804.5 144.5h7M1804.5 146.5h7" stroke="#000" stroke-width="1"/><path d="M1806.61 158.99L1806.58 156.84L1809.42 156.84L1809.39 158.99L1810.56 159.47L1812.06 157.93L1814.07 159.94L1812.53 161.44L1813.01 162.61L1815.16 162.58L1815.16 165.42L1813.01 165.39L1812.53 166.56L1814.07 168.06L1812.06 170.07L1810.56 168.53L1809.39 169.01L1809.42 171.16L1806.58 171.16L1806.61 169.01L1805.44 168.53L1803.94 170.07L1801.93 168.06L1803.47 166.56L1802.99 165.39L1800.84 165.42L1800.84 162.58L1802.99 162.61L1803.47 161.44L1801.93 159.94L1803.94 157.93L1805.44 159.47Z" fill="#000"/><circle cx="1808" cy="164" r="2.6" fill="#ffff00"/><path d="M1806.5 186.5h3v5.5l-1.5 1v4h2.5l1.500 2.500h-12l2-2.500h3.500v-5z" fill="#ff00ff" stroke="#000" stroke-width="1"/><path d="M1806.5 208.5h3v5.5l-1.5 1v4h2.5l1.5 2.5h-12l2-2.5h3.5v-5z" fill="#fff" stroke="#000" stroke-width="1"/><path d="M1809.500 208.5h5.500l-1 4.500l-2.500 2h-3z" fill="#ff00ff" stroke="#000" stroke-width="1"/><rect x="1802.5" y="230.5" width="11" height="13" fill="#ff00ff" stroke="#000"/><rect x="1807.5" y="233.500" width="2.500" height="7.500" fill="#808080" stroke="#000"/><path d="M1807.5 251.5h2v6l2 2.5h-6.500l2.500-2.500z" fill="#fff" stroke="#000"/><path d="M1803.500 260.5h9.500v2.500h1.500v3h-12.500v-3h1.500z" fill="#ff00ff" stroke="#000"/><rect x="1800.5" y="277.5" width="14" height="6.500" fill="#808080" stroke="#000"/><path d="M1802 281h11" stroke="#00ffff" stroke-width="1.600" stroke-dasharray="2 1"/><rect x="1802.5" y="303.5" width="10.500" height="13" fill="#fff" stroke="#000"/><path d="M1802.500 307.500h10.500M1802.500 312.500h10.500" stroke="#000"/><rect x="1803.5" y="326.5" width="10.500" height="13" fill="#606060"/><rect x="1802.5" y="325.5" width="10.500" height="13" fill="#ffff00" stroke="#000"/><path d="M1803 331l5-5M1803 335l9-9M1803 338.500l10-10M1806.500 338.500l6.500-6.500M1810 338.500l3-3" stroke="#000" stroke-width=".9"/><rect x="1802.5" y="347.5" width="10.500" height="13" fill="#008080" stroke="#000"/><rect x="1803" y="352" width="9.500" height="4.500" fill="#ffff00"/><rect x="1803" y="356.500" width="9.500" height="3.500" fill="#00ffff"/><path d="M1804 354h8M1804 350h3M1808 350h4" stroke="#000" stroke-width="1.200" stroke-dasharray="2 1"/><path d="M1804 357.500l3 2M1808 357.500l3 2" stroke="#006060" stroke-width="1.200"/><path d="M1804 350h3M1808.500 350h3" stroke="#40c0c0" stroke-width="1"/><path d="M1808.500 378.500h4v4.500l-1.500 1.500v3.500h2.500l1.500 2.500h-10.500l1.500-2.500h3v-4z" fill="#fff" stroke="#000"/><path d="M1806.500 375v5M1801 382.500h5" stroke="#0000ff" stroke-width="1.600"/><path d="M1804.500 378.500h4l-2 2.500zM1804.500 380.500l2.500 2l-2.500 2z" fill="#0000ff"/><path d="M1806.500 398v6M1809.500 398v6" stroke="#000"/><path d="M1805.500 403.500h5l1.500 3h-8z" fill="#fff" stroke="#000"/><rect x="1802.500" y="406.500" width="11" height="4" fill="#ff00ff" stroke="#000"/><path d="M1804 424.500q4-3.500 11-3.500l-10.500 11.500z" fill="#ff70ff"/><path d="M1804 424.500q4-3.500 11-3.500" stroke="#800000" stroke-width="1.200" fill="none"/><rect x="1800.5" y="424.500" width="3" height="8" fill="#808080" stroke="#000"/><path d="M1803.500 447q2.500-3 6-3h5.500" stroke="#800000" stroke-width="1.400" fill="none"/><rect x="1800.5" y="446.500" width="3" height="8" fill="#808080" stroke="#000"/><rect x="1804" y="469" width="11" height="8.500" fill="#00ffff"/><path d="M1804 470.500h11" stroke="#0000ff" stroke-width="1.400" stroke-dasharray="2.500 1.500"/><path d="M1803 466.500h12" stroke="#800000" stroke-width="1"/><rect x="1800.5" y="466.500" width="3" height="11" fill="#808080" stroke="#000"/><path d="M1803 486h1.500v1h1.500v-1h1.500v1h1.500v-1h1.500v1h1.500v-1h1.500v3.500h-10.500z" fill="#0000ff"/><path d="M1803 490h12" stroke="#800000" stroke-width="1.200"/><rect x="1800.5" y="489.500" width="3" height="9" fill="#808080" stroke="#000"/><path d="M1805 511v5" stroke="#0000ff" stroke-width="1.600"/><path d="M1802.500 514.500h5l-2.500 3z" fill="#0000ff"/><path d="M1801 518.500h10.500" stroke="#800000" stroke-width="1.400"/><rect x="1811.5" y="511.500" width="3" height="8" fill="#808080" stroke="#000"/><path d="M1809 529v7M1804 540.500h10" stroke="#0000ff" stroke-width="1.800"/><path d="M1806 534.500h6l-3 3.500zM1801.500 540.500l3.500-3v6z" fill="#0000ff"/><rect x="1805.5" y="552.500" width="4" height="7" fill="#808080" stroke="#000"/><path d="M1801 560.500h13" stroke="#000"/><path d="M1802.500 561.500l3 2l-3 2.500M1806.500 561.500l3 2l-3 2.500M1810.500 561.500l3 2l-3 2.500" stroke="#00c000" stroke-width="1.100" fill="none"/><rect x="1800.5" y="579.500" width="7.500" height="8" fill="#ffff00" stroke="#000"/><rect x="1807.500" y="574.500" width="7.500" height="8" fill="#808000"/><rect x="1806.5" y="573.500" width="7.500" height="8" fill="#ffff00" stroke="#000"/><text x="1802.800" y="586.300" font-size="7" font-family="Liberation Sans,sans-serif">1</text><text x="1808.700" y="580.300" font-size="7" font-family="Liberation Sans,sans-serif">2</text><path d="M1803.500 609.500v-2.500l4-3.500l4 3.500v2.500" stroke="#ff0000" stroke-width="1.900" fill="none" stroke-linejoin="round"/><path d="M1801.500 606.500h4.500l-2.500 3.500z" fill="#ff0000"/><path d="M1810 613.500h5.500" stroke="#ff0000" stroke-width="1.500"/><path d="M1808.500 613.500l3-2.500v5z" fill="#ff0000"/><rect x="1803.500" y="611.500" width="3" height="5.500" fill="#ffff00" stroke="#000"/><path d="M1802.500 632.500h10.500v3.500l-1.500-1.800l-1.500 1.800l-1.500-1.800l-1.500 1.800l-1.500-1.800l-1.500 1.800l-1.500-1.800z" fill="#ff0000"/><rect x="1802.500" y="628.500" width="10" height="4" fill="#ffff00" stroke="#000"/><path d="M1806.500 648.500h3v7.500h3v3.500h-9v-3.500h3z" fill="#ffff00" stroke="#000"/><path d="M1804.500 657.500h3.500M1808 654v5" stroke="#ff0000" stroke-width="1.200"/><path d="M1801.500 678L1804 682.300H1808Q1812.500 679.500 1814.500 671.500" stroke="#ff0000" stroke-width="1.300" fill="none"/><path d="M1801 676.500h5M1809 670.800h6.500" stroke="#800000" stroke-width="1.400"/><rect x="1806.500" y="671.500" width="2.500" height="6" fill="#ffff00" stroke="#000"/></svg>
<div class="a" style="left:1792px;top:813px;width:114px;height:20px;background:#d0d0d0;"></div>
<div class="t" style="left:1795.3px;top:816.00px;font-size:12px;height:14px;line-height:14px;letter-spacing:-0.004px;">Outputs</div>
<div class="a" style="left:1892px;top:825px;width:6px;height:2px;background:#000;"></div>
<div class="btn" style="left:1796px;top:837px;width:106px;height:22px"></div>
<div class="t" style="left:1819.4px;top:841.00px;font-size:12px;height:14px;line-height:14px;letter-spacing:0.072px;">Add picture</div>
<div class="t" style="left:1796.3px;top:863.00px;font-size:12px;height:14px;line-height:14px;letter-spacing:-0.012px;">Dimensioning :</div>
<div class="t" style="left:1896.3px;top:863.00px;font-size:12px;height:14px;line-height:14px;letter-spacing:-0.888px;">0</div>
<div class="t" style="left:1796.3px;top:881.00px;font-size:12px;height:14px;line-height:14px;letter-spacing:-0.145px;">Total :</div>
<div class="t" style="left:1896.3px;top:881.00px;font-size:12px;height:14px;line-height:14px;letter-spacing:-0.888px;">0</div>
<div class="btn" style="left:1796px;top:898px;width:106px;height:22px"></div>
<div class="t" style="left:1819.4px;top:902.00px;font-size:12px;height:14px;line-height:14px;letter-spacing:-0.061px;">List of pictures</div>
<div class="a" style="left:1796px;top:926px;width:106px;height:1px;background:#a0a0a0;"></div>
<div class="btn" style="left:1796px;top:933px;width:51px;height:42px"></div>
<div class="btn" style="left:1852px;top:933px;width:50px;height:42px"></div>
<div class="btn" style="left:1796px;top:978px;width:106px;height:22px"></div>
<div class="t" style="left:1819.3px;top:982.00px;font-size:12px;height:14px;line-height:14px;letter-spacing:-0.040px;">Copy view</div>
<svg style="left:1789px;top:810px" width="120" height="200" viewBox="1789 810 120 200"><rect x="1800.500" y="840.500" width="15" height="15" fill="#e8e8e8" stroke="#6a6a6a"/><path d="M1803.500 843.500h2.500v6h3v3h-5.500z" fill="#fff" stroke="#000"/><path d="M1808 845.500h6M1811 842.500v6" stroke="#00a000" stroke-width="2"/><rect x="1800.500" y="901.500" width="15" height="15" fill="#e8e8e8" stroke="#6a6a6a"/><path d="M1803.500 904.500h2.500v6h3v3h-5.500z" fill="#fff" stroke="#000"/><path d="M1808 903.500h6M1808 905.500h6M1810 907.500h4" stroke="#000" stroke-width="1" stroke-dasharray="2 0.800"/><rect x="1800.500" y="981.500" width="8" height="10" fill="#e8e8e8" stroke="#6a6a6a"/><path d="M1802.500 983.500h2v3h2v2.500h-4z" fill="#fff" stroke="#000"/><path d="M1810 985.500h2.500v4" stroke="#00a000" stroke-width="1.400" fill="none"/><path d="M1810.500 988.500h4l-2 2.500z" fill="#00a000"/><rect x="1809.500" y="991.500" width="6" height="5" fill="#fff" stroke="#222" stroke-width="1.200"/><path d="M1811 994.500h3" stroke="#222"/><rect x="1812" y="942.500" width="20" height="5" fill="#c9b27f" stroke="#1a1a1a"/><rect x="1814.5" y="940.500" width="15.500" height="7" rx="1" fill="#fff" stroke="#1a1a1a" stroke-width="1.200"/><rect x="1810.5" y="946.500" width="23" height="12" rx="1.500" fill="#c9b27f" stroke="#1a1a1a" stroke-width="1.200"/><rect x="1812" y="948" width="1.200" height="1.200" fill="#1a1a1a"/><rect x="1830" y="948" width="2" height="1.200" fill="#1a1a1a"/><rect x="1813.5" y="952.500" width="17.500" height="4" fill="#808080" stroke="#1a1a1a"/><rect x="1814.5" y="956" width="15.500" height="12.500" fill="#fff" stroke="#1a1a1a" stroke-width="1.200"/><path d="M1816.5 958.500h11.500M1816.5 960.500h11.500M1819.5 962.500h8.500M1819.5 964.500h8.500" stroke="#1a1a1a" stroke-width="1.200"/><path d="M1817 962.500h1M1816.5 964.500h2M1821 966.500h1.200M1823.5 966.500h1.800M1826.5 966.500h1.800" stroke="#1a1a1a" stroke-width="1.200"/><rect x="1867" y="942.500" width="20" height="5" fill="#c9b27f" stroke="#1a1a1a"/><rect x="1869.5" y="940.500" width="15.500" height="7" rx="1" fill="#fff" stroke="#1a1a1a" stroke-width="1.200"/><rect x="1865.5" y="946.500" width="23" height="12" rx="1.500" fill="#c9b27f" stroke="#1a1a1a" stroke-width="1.200"/><rect x="1867" y="948" width="1.200" height="1.200" fill="#1a1a1a"/><rect x="1885" y="948" width="2" height="1.200" fill="#1a1a1a"/><rect x="1868.5" y="952.500" width="17.500" height="4" fill="#808080" stroke="#1a1a1a"/><rect x="1869.5" y="956" width="15.500" height="12.500" fill="#fff" stroke="#1a1a1a" stroke-width="1.200"/><path d="M1873 958.500h-1.500v8h1.500" stroke="#ff0000" stroke-width="1.300" fill="none"/><path d="M1874.5 958.500h7.500v8h-1.500zM1876 960.500h6M1877.5 962.500h4.500M1879 964.500h3" fill="#fff" stroke="#ff0000" stroke-width="1.200"/></svg>
<div class="a" style="left:1px;top:1007px;width:1908px;height:1px;background:#d7d7d7;"></div>
<div class="a" style="left:1906px;top:1022px;width:2px;height:2px;background:#bfbfbf;"></div>
<div class="a" style="left:1903px;top:1025px;width:2px;height:2px;background:#bfbfbf;"></div>
<div class="a" style="left:1906px;top:1025px;width:2px;height:2px;background:#bfbfbf;"></div>
<div class="a" style="left:1900px;top:1028px;width:2px;height:2px;background:#bfbfbf;"></div>
<div class="a" style="left:1903px;top:1028px;width:2px;height:2px;background:#bfbfbf;"></div>
<div class="a" style="left:1906px;top:1028px;width:2px;height:2px;background:#bfbfbf;"></div>
<div class="a" style="left:1px;top:704px;width:1787px;height:303px;background:#f0f0f0;"></div>
<div class="a" style="left:4px;top:710px;width:20px;height:294px;background:#d0d0d0;"></div>
<div class="a" style="left:15px;top:717px;width:2px;height:6px;background:#000;"></div>
<div class="vt" style="left:7px;top:1001px;letter-spacing:0.066px;">Dimensioning</div>
<div class="t" style="left:29.3px;top:721.00px;font-size:12px;height:14px;line-height:14px;font-weight:bold;letter-spacing:-0.334px;">Dimensioning :</div>
<div class="btn" style="left:116px;top:715px;width:23px;height:26px"></div>
<div class="a" style="left:144px;top:715px;width:23px;height:26px;background:#cccccc;border:1px solid #bfbfbf"></div>
<div class="sel" style="left:172px;top:715px;width:26px;height:26px"></div>
<div class="t" style="left:178.7px;top:721.00px;font-size:12px;height:14px;line-height:14px;letter-spacing:-0.181px;">[1]</div>
<svg style="left:100px;top:710px" width="110" height="40" viewBox="100 710 110 40">
<rect x="121.500" y="721.500" width="13" height="13" rx="3" fill="none" stroke="#109810" stroke-width="1.200"/><path d="M123.200 728h9.600M128 723.200v9.600" stroke="#109810" stroke-width="2"/>
<rect x="149.500" y="721.500" width="13" height="13" rx="3" fill="none" stroke="#b4b4b4" stroke-width="1.200"/><path d="M151.200 728h9.600" stroke="#b4b4b4" stroke-width="2"/>
</svg>
<div class="a" style="left:29px;top:747px;width:1751px;height:1px;background:#a0a0a0;"></div>
<div class="btn" style="left:1692px;top:715px;width:88px;height:26px"></div>
<div class="t" style="left:1723.6px;top:721.00px;font-size:12px;height:14px;line-height:14px;letter-spacing:-0.081px;">In detail</div>
<svg style="left:1700px;top:715px" width="24" height="26" viewBox="1700 715 24 26">
<path d="M1705.500 722.500h6l2 2v10.500h-8z" fill="#fff" stroke="#000"/><path d="M1713.500 735.500v-9" stroke="#808080"/><path d="M1707 730.500h5M1707 732.500h2M1710 732.500h2" stroke="#000"/>
<circle cx="1712.500" cy="724.500" r="3.800" fill="#00e0e0" stroke="#000" stroke-width="1.200"/><path d="M1708.500 723.500l2.500 3" stroke="#000" stroke-width="1.600"/><path d="M1715.500 728l4 4.500" stroke="#000" stroke-width="2"/>
</svg>
<div class="a" style="left:29px;top:754px;width:661px;height:245px;background:#a0a0a0;"></div>
<div class="a" style="left:30px;top:755px;width:659px;height:243px;background:#fff;"></div>
<div class="a" style="left:30px;top:755px;width:659px;height:37px;background:#f0f0f0;"></div>
<div class="a" style="left:30px;top:793px;width:659px;height:18px;background:#e0e0e0;"></div>
<div class="a" style="left:30px;top:812px;width:659px;height:18px;background:#f0f0f0;"></div>
<div class="a" style="left:30px;top:831px;width:659px;height:18px;background:#f0f0f0;"></div>
<div class="a" style="left:606px;top:793px;width:83px;height:18px;background:#606060;"></div>
<div class="a" style="left:606px;top:812px;width:83px;height:18px;background:#fff;"></div>
<div class="a" style="left:606px;top:831px;width:83px;height:18px;background:#fff;"></div>
<div class="a" style="left:30px;top:792px;width:659px;height:1px;background:#a0a0a0;"></div>
<div class="a" style="left:30px;top:811px;width:659px;height:1px;background:#a0a0a0;"></div>
<div class="a" style="left:30px;top:830px;width:659px;height:1px;background:#a0a0a0;"></div>
<div class="a" style="left:30px;top:849px;width:659px;height:1px;background:#a0a0a0;"></div>
<div class="a" style="left:67px;top:755px;width:1px;height:95px;background:#a0a0a0;"></div>
<div class="a" style="left:273px;top:755px;width:1px;height:95px;background:#a0a0a0;"></div>
<div class="a" style="left:356px;top:755px;width:1px;height:95px;background:#a0a0a0;"></div>
<div class="a" style="left:439px;top:755px;width:1px;height:95px;background:#a0a0a0;"></div>
<div class="a" style="left:605px;top:755px;width:1px;height:95px;background:#a0a0a0;"></div>
<div class="a" style="left:522px;top:774px;width:1px;height:76px;background:#a0a0a0;"></div>
<div class="t" style="left:33.4px;top:758.00px;font-size:12px;height:14px;line-height:14px;letter-spacing:-0.163px;">No.</div>
<svg style="left:57px;top:762px" width="8" height="5" viewBox="0 0 8 5"><path d="M0.300 4.500L3.700 0.500L7.200 4.500z" fill="#a0a0a0"/></svg>
<div class="t" style="left:155.4px;top:758.00px;font-size:12px;height:14px;line-height:14px;letter-spacing:-0.338px;">Force</div>
<div class="t" style="left:309.3px;top:758.00px;font-size:12px;height:14px;line-height:14px;letter-spacing:-1.544px;">F</div>
<div class="t" style="left:315px;top:762.50px;font-size:9px;height:11px;line-height:11px;letter-spacing:-0.100px;">x</div>
<div class="t" style="left:392.1px;top:758.00px;font-size:12px;height:14px;line-height:14px;letter-spacing:-1.544px;">F</div>
<div class="t" style="left:397.8px;top:762.50px;font-size:9px;height:11px;line-height:11px;letter-spacing:-0.100px;">z</div>
<div class="t" style="left:295.6px;top:777.00px;font-size:12px;height:14px;line-height:14px;letter-spacing:0.521px;">[kN/m]</div>
<div class="t" style="left:378.6px;top:777.00px;font-size:12px;height:14px;line-height:14px;letter-spacing:0.521px;">[kN/m]</div>
<div class="t" style="left:488.2px;top:758.00px;font-size:12px;height:14px;line-height:14px;letter-spacing:0.179px;">Applic. point</div>
<div class="t" style="left:465.8px;top:777.00px;font-size:12px;height:14px;line-height:14px;letter-spacing:0.320px;">x [m]</div>
<div class="t" style="left:549.8px;top:777.00px;font-size:12px;height:14px;line-height:14px;letter-spacing:0.200px;">z [m]</div>
<div class="t" style="left:631.4px;top:758.00px;font-size:12px;height:14px;line-height:14px;letter-spacing:-0.135px;">Coeff.</div>
<div class="t" style="left:640.7px;top:777.00px;font-size:12px;height:14px;line-height:14px;letter-spacing:-0.248px;">[–]</div>
<div class="t" style="left:46px;top:796.00px;font-size:12px;height:14px;line-height:14px;letter-spacing:-1.688px;">1</div>
<div class="t" style="left:70.5px;top:796.00px;font-size:12px;height:14px;line-height:14px;letter-spacing:0.056px;">Weight - wall</div>
<div class="t" style="left:333.0px;top:796.00px;font-size:12px;height:14px;line-height:14px;letter-spacing:-0.565px;">0,00</div>
<div class="t" style="left:404.09999999999997px;top:796.00px;font-size:12px;height:14px;line-height:14px;letter-spacing:-0.601px;">331,74</div>
<div class="t" style="left:498.8px;top:796.00px;font-size:12px;height:14px;line-height:14px;letter-spacing:-0.640px;">2,51</div>
<div class="t" style="left:577.5px;top:796.00px;font-size:12px;height:14px;line-height:14px;letter-spacing:-0.432px;">-3,33</div>
<div class="t" style="left:661px;top:796.00px;font-size:12px;height:14px;line-height:14px;color:#fff;letter-spacing:-0.806px;">1,000</div>
<div class="t" style="left:46px;top:815.00px;font-size:12px;height:14px;line-height:14px;letter-spacing:-1.688px;">2</div>
<div class="t" style="left:70.5px;top:815.00px;font-size:12px;height:14px;line-height:14px;letter-spacing:-0.012px;">Weight - earth wedge</div>
<div class="t" style="left:333.0px;top:815.00px;font-size:12px;height:14px;line-height:14px;letter-spacing:-0.565px;">0,00</div>
<div class="t" style="left:410.59999999999997px;top:815.00px;font-size:12px;height:14px;line-height:14px;letter-spacing:-0.686px;">58,52</div>
<div class="t" style="left:498.8px;top:815.00px;font-size:12px;height:14px;line-height:14px;letter-spacing:-0.640px;">3,47</div>
<div class="t" style="left:577.5px;top:815.00px;font-size:12px;height:14px;line-height:14px;letter-spacing:-0.432px;">-2,43</div>
<div class="t" style="left:661px;top:815.00px;font-size:12px;height:14px;line-height:14px;letter-spacing:-0.806px;">1,000</div>
<div class="t" style="left:46px;top:834.00px;font-size:12px;height:14px;line-height:14px;letter-spacing:-1.688px;">3</div>
<div class="t" style="left:70.5px;top:834.00px;font-size:12px;height:14px;line-height:14px;letter-spacing:-0.180px;">Active pressure</div>
<div class="t" style="left:316.8px;top:834.00px;font-size:12px;height:14px;line-height:14px;letter-spacing:-0.486px;">-136,79</div>
<div class="t" style="left:404.7px;top:834.00px;font-size:12px;height:14px;line-height:14px;letter-spacing:-0.701px;">191,25</div>
<div class="t" style="left:498.8px;top:834.00px;font-size:12px;height:14px;line-height:14px;letter-spacing:-0.640px;">3,94</div>
<div class="t" style="left:577.5px;top:834.00px;font-size:12px;height:14px;line-height:14px;letter-spacing:-0.432px;">-2,47</div>
<div class="t" style="left:661px;top:834.00px;font-size:12px;height:14px;line-height:14px;letter-spacing:-0.806px;">1,000</div>
<div class="a" style="left:703px;top:761px;width:11px;height:1px;background:#a0a0a0;"></div>
<div class="a" style="left:789px;top:761px;width:235px;height:1px;background:#a0a0a0;"></div>
<div class="t" style="left:717.4px;top:755.00px;font-size:12px;height:14px;line-height:14px;letter-spacing:-0.090px;">Place of dim.</div>
<div class="a" style="left:703px;top:777px;width:124px;height:23px;background:#fff;border:1px solid #7a7a7a"></div>
<div class="t" style="left:707px;top:782.00px;font-size:12px;height:14px;line-height:14px;letter-spacing:0.163px;">Wall jump</div>
<svg style="left:812px;top:786px" width="9" height="6" viewBox="0 0 9 6"><path d="M0.700 1.200h7.500l-3.750 4.200z" fill="#000"/></svg>
<div class="t" style="left:843.5px;top:782.00px;font-size:12px;height:14px;line-height:14px;color:#a0a0a0;letter-spacing:-0.243px;">Depth :</div>
<div class="a" style="left:904px;top:777px;width:57px;height:23px;background:#f0f0f0;border:1px solid #bfbfbf"></div>
<div class="t" style="left:933.8000000000001px;top:782.00px;font-size:12px;height:14px;line-height:14px;color:#a0a0a0;letter-spacing:-0.490px;">0,10</div>
<div class="t" style="left:966.5px;top:782.00px;font-size:12px;height:14px;line-height:14px;color:#a0a0a0;letter-spacing:0.443px;">[m]</div>
<div class="a" style="left:703px;top:815px;width:321px;height:1px;background:#a0a0a0;"></div>
<div class="a" style="left:704px;top:833px;width:14px;height:14px;background:#fff;border:1px solid #555"></div>
<svg style="left:704px;top:833px" width="14" height="14" viewBox="0 0 14 14"><path d="M2.800 7.300L5.500 10L11 3.800" stroke="#000" stroke-width="1.700" fill="none"/></svg>
<div class="t" style="left:724.2px;top:833.00px;font-size:12px;height:14px;line-height:14px;letter-spacing:-0.073px;">Reinforced concrete</div>
<div class="t" style="left:703.6px;top:856.00px;font-size:12px;height:14px;line-height:14px;letter-spacing:-0.413px;">Cover :</div>
<div class="a" style="left:745px;top:851px;width:56px;height:23px;background:#fff;border:1px solid #7a7a7a"></div>
<div class="t" style="left:774.0px;top:856.00px;font-size:12px;height:14px;line-height:14px;letter-spacing:-0.515px;">30,0</div>
<div class="t" style="left:806.4px;top:856.00px;font-size:12px;height:14px;line-height:14px;letter-spacing:0.557px;">[mm]</div>
<div class="t" style="left:852.3px;top:856.00px;font-size:12px;height:14px;line-height:14px;letter-spacing:-0.167px;">No. of bars :</div>
<div class="a" style="left:921px;top:851px;width:56px;height:23px;background:#fff;border:1px solid #7a7a7a"></div>
<div class="t" style="left:944.5px;top:856.00px;font-size:12px;height:14px;line-height:14px;letter-spacing:-0.706px;">12,00</div>
<div class="t" style="left:982.7px;top:856.00px;font-size:12px;height:14px;line-height:14px;letter-spacing:0.290px;">[pcs/m]</div>
<div class="t" style="left:852.3px;top:882.00px;font-size:12px;height:14px;line-height:14px;letter-spacing:-0.239px;">Bar diam. :</div>
<div class="a" style="left:921px;top:877px;width:56px;height:23px;background:#fff;border:1px solid #7a7a7a"></div>
<div class="t" style="left:950.2px;top:882.00px;font-size:12px;height:14px;line-height:14px;letter-spacing:-0.640px;">25,0</div>
<div class="t" style="left:982.7px;top:882.00px;font-size:12px;height:14px;line-height:14px;letter-spacing:0.557px;">[mm]</div>
<div class="a" style="left:704px;top:905px;width:14px;height:14px;background:#f0f0f0;border:1px solid #bfbfbf"></div>
<div class="t" style="left:724.6px;top:905.00px;font-size:12px;height:14px;line-height:14px;color:#a0a0a0;letter-spacing:-0.041px;">Cracks initiation</div>
<div class="t" style="left:703.6px;top:933.00px;font-size:12px;height:14px;line-height:14px;letter-spacing:-0.111px;">Coefficient of allowable stress (No. 47):</div>
<div class="a" style="left:913px;top:928px;width:92px;height:23px;background:#fff;border:1px solid #7a7a7a"></div>
<div class="t" style="left:978.5px;top:933.00px;font-size:12px;height:14px;line-height:14px;letter-spacing:-0.715px;">1,00</div>
<div class="t" style="left:1010.8px;top:933.00px;font-size:12px;height:14px;line-height:14px;letter-spacing:-0.248px;">[–]</div>
<div class="a" style="left:703px;top:966px;width:11px;height:1px;background:#a0a0a0;"></div>
<div class="a" style="left:796px;top:966px;width:228px;height:1px;background:#a0a0a0;"></div>
<div class="t" style="left:717.4px;top:960.00px;font-size:12px;height:14px;line-height:14px;font-weight:bold;letter-spacing:-0.320px;">Dimensioning</div>
<div class="t" style="left:703.6px;top:983.00px;font-size:12px;height:14px;line-height:14px;font-weight:bold;letter-spacing:-0.573px;">BEARING CAPACITY:</div>
<div class="t" style="left:831.9px;top:983.00px;font-size:12px;height:14px;line-height:14px;font-weight:bold;color:#0a8a0a;letter-spacing:-0.527px;">SATISFACTORY</div>
<div class="t" style="left:933.4px;top:983.00px;font-size:12px;height:14px;line-height:14px;letter-spacing:-0.547px;">(26,0%)</div>
</body></html>
